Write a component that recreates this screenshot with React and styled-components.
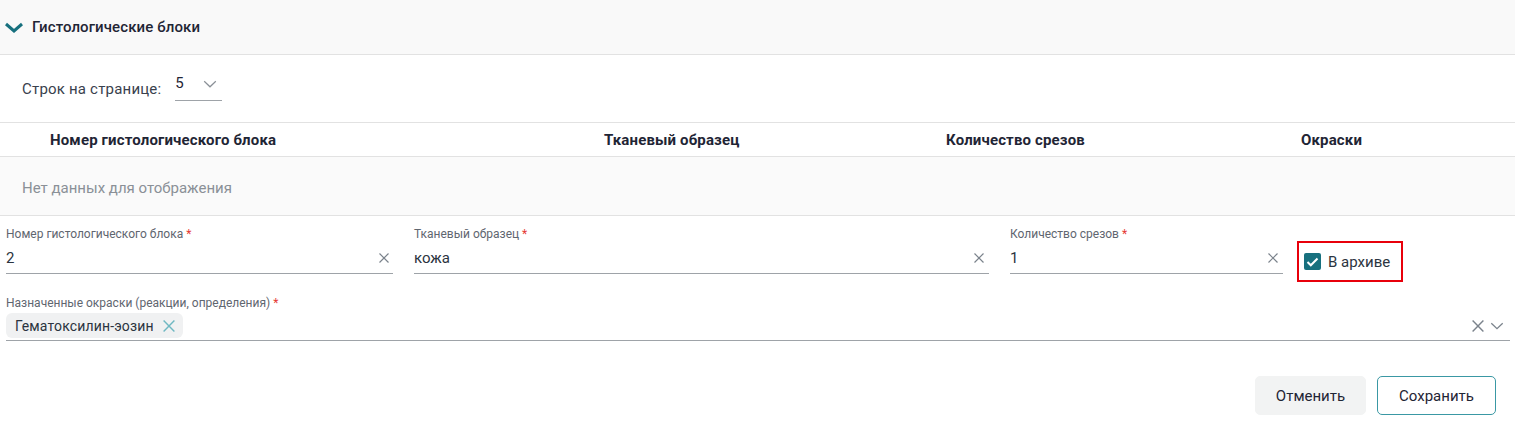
import React from 'react';
import styled, { createGlobalStyle } from 'styled-components';

const Global = createGlobalStyle`
    body {
        margin: 0;
        background: #fff;
        font-family: Roboto, "Liberation Sans", Arial, sans-serif;
        color: #1f2535;
    }
`

const Page = styled.div`
    width: 1515px;
`

const SectionHeader = styled.div`
    height: 55px;
    box-sizing: border-box;
    background: #f9f9f9;
    border-bottom: 1px solid #e2e2e2;
    display: flex;
    align-items: center;
    padding-left: 3px;
    gap: 7px;
    & span {
        font-size: 15px;
        font-weight: 500;
        letter-spacing: 0.1px;
        color: #1f2535;
    }
`

const Pager = styled.div`
    height: 67px;
    box-sizing: border-box;
    display: flex;
    align-items: center;
    padding-left: 22px;
    gap: 14px;
    font-size: 15px;
    letter-spacing: 0.2px;
    color: #39414d;
`

const PageSelect = styled.div`
    width: 47px;
    height: 27px;
    box-sizing: border-box;
    border-bottom: 1px solid #9ea3a8;
    display: flex;
    justify-content: space-between;
    align-items: flex-start;
    margin-top: -2px;
    color: #1f2535;
    & svg {
        margin: 6px 5px 0 0;
    }
`

const TableRow = styled.div`
    display: grid;
    grid-template-columns: 40px 554px 342px 355px 1fr;
    height: ${p => p.$h}px;
    box-sizing: border-box;
    border-top: 1px solid #e2e2e2;
    background: ${p => p.$bg || '#fff'};
    align-items: center;
`

const HeadCell = styled.div`
    padding-left: 10px;
    font-size: 15px;
    font-weight: 700;
    letter-spacing: 0.15px;
    color: #1f2535;
`

const EmptyRow = styled.div`
    height: 60px;
    box-sizing: border-box;
    border-top: 1px solid #e2e2e2;
    border-bottom: 1px solid #e2e2e2;
    background: #fafafa;
    display: flex;
    align-items: center;
    padding: 3px 0 0 22px;
    font-size: 15px;
    color: #8a9097;
`

const Form = styled.div`
    padding: 10px 5px 0 6px;
`

const FieldRow = styled.div`
    display: grid;
    grid-template-columns: 387px 575px 273px auto;
    column-gap: 21px;
`

const Field = styled.div`
    display: flex;
    flex-direction: column;
    margin-top: ${p => p.$top || 0}px;
`

const Label = styled.div`
    font-size: 12px;
    line-height: 16px;
    color: #5f6670;
    & b {
        color: #e53935;
        font-weight: 400;
    }
`

const InputBox = styled.div`
    height: ${p => p.$h || 32}px;
    box-sizing: border-box;
    border-bottom: 1px solid #9ea3a8;
    display: flex;
    align-items: center;
    justify-content: space-between;
    font-size: 15px;
    color: #2b3440;
    padding-right: ${p => p.$pr || 4}px;
`

const ArchiveBox = styled.label`
    align-self: start;
    margin: 15px 0 0 -7px;
    height: 41px;
    width: 106px;
    box-sizing: border-box;
    border: 2px solid #e8000b;
    display: flex;
    align-items: center;
    gap: 7px;
    padding-left: 5px;
    font-size: 15px;
    color: #2b3440;
`

const CheckBox = styled.span`
    width: 17px;
    height: 17px;
    border-radius: 2px;
    background: #17707e;
    display: flex;
    align-items: center;
    justify-content: center;
`

const Chip = styled.span`
    height: 25px;
    box-sizing: border-box;
    border-radius: 6px;
    background: #f0f1f2;
    display: inline-flex;
    align-items: center;
    gap: 9px;
    padding: 0 8px 0 9px;
    font-size: 14px;
    letter-spacing: 0.15px;
    color: #2b3440;
`

const IconGroup = styled.div`
    display: flex;
    align-items: center;
    gap: 6px;
`

const Actions = styled.div`
    display: flex;
    justify-content: flex-end;
    gap: 11px;
    padding: 35px 19px 0 0;
`

const Button = styled.button`
    height: 39px;
    width: ${p => p.$w}px;
    box-sizing: border-box;
    border-radius: 5px;
    font-family: inherit;
    font-size: 15px;
    color: #1f2535;
    background: ${p => p.$primary ? '#fff' : '#f2f3f3'};
    border: 1px solid ${p => p.$primary ? '#3a98a4' : '#f2f3f3'};
`

const Cross = ({ size = 10, color = '#7b838c', w = 1.2 }) => (
    <svg width={size} height={size} viewBox="0 0 10 10">
        <path d="M0.5 0.5 L9.5 9.5 M9.5 0.5 L0.5 9.5" stroke={color} strokeWidth={w} fill="none" />
    </svg>
)

const Chevron = ({ width, height, color, w }) => (
    <svg width={width} height={height} viewBox={`0 0 ${width} ${height}`}>
        <polyline points={`${w},${w} ${width / 2},${height - w} ${width - w},${w}`} stroke={color} strokeWidth={w} fill="none" />
    </svg>
)

function App() {
    return (
        <Page>
            <Global />
            <SectionHeader>
                <Chevron width={22} height={13} color="#17707e" w={3} />
                <span>Гистологические блоки</span>
            </SectionHeader>
            <Pager>
                Строк на странице:
                <PageSelect>
                    5
                    <Chevron width={14} height={8} color="#8a9097" w={1.2} />
                </PageSelect>
            </Pager>
            <TableRow $h={34}>
                <div />
                <HeadCell>Номер гистологического блока</HeadCell>
                <HeadCell>Тканевый образец</HeadCell>
                <HeadCell>Количество срезов</HeadCell>
                <HeadCell>Окраски</HeadCell>
            </TableRow>
            <EmptyRow>Нет данных для отображения</EmptyRow>
            <Form>
                <FieldRow>
                    <Field>
                        <Label>Номер гистологического блока <b>*</b></Label>
                        <InputBox $pr={4}>2<Cross /></InputBox>
                    </Field>
                    <Field>
                        <Label>Тканевый образец <b>*</b></Label>
                        <InputBox $pr={5}>кожа<Cross /></InputBox>
                    </Field>
                    <Field>
                        <Label>Количество срезов <b>*</b></Label>
                        <InputBox $pr={5}>1<Cross /></InputBox>
                    </Field>
                    <ArchiveBox>
                        <CheckBox>
                            <svg width="13" height="10" viewBox="0 0 13 10">
                                <polyline points="1.5,5 4.8,8.3 11.5,1.5" stroke="#fff" strokeWidth="2" fill="none" />
                            </svg>
                        </CheckBox>
                        В архиве
                    </ArchiveBox>
                </FieldRow>
                <Field $top={13}>
                    <Label>Назначенные окраски (реакции, определения) <b>*</b></Label>
                    <InputBox $pr={6} $h={30}>
                        <Chip>
                            Гематоксилин-эозин
                            <Cross size={12} color="#6fb8c2" w={1.2} />
                        </Chip>
                        <IconGroup>
                            <Cross size={12} color="#7b838c" w={1.2} />
                            <Chevron width={14} height={8} color="#7b838c" w={1.3} />
                        </IconGroup>
                    </InputBox>
                </Field>
            </Form>
            <Actions>
                <Button $w={111}>Отменить</Button>
                <Button $w={119} $primary>Сохранить</Button>
            </Actions>
        </Page>
    );
}

export default App;
